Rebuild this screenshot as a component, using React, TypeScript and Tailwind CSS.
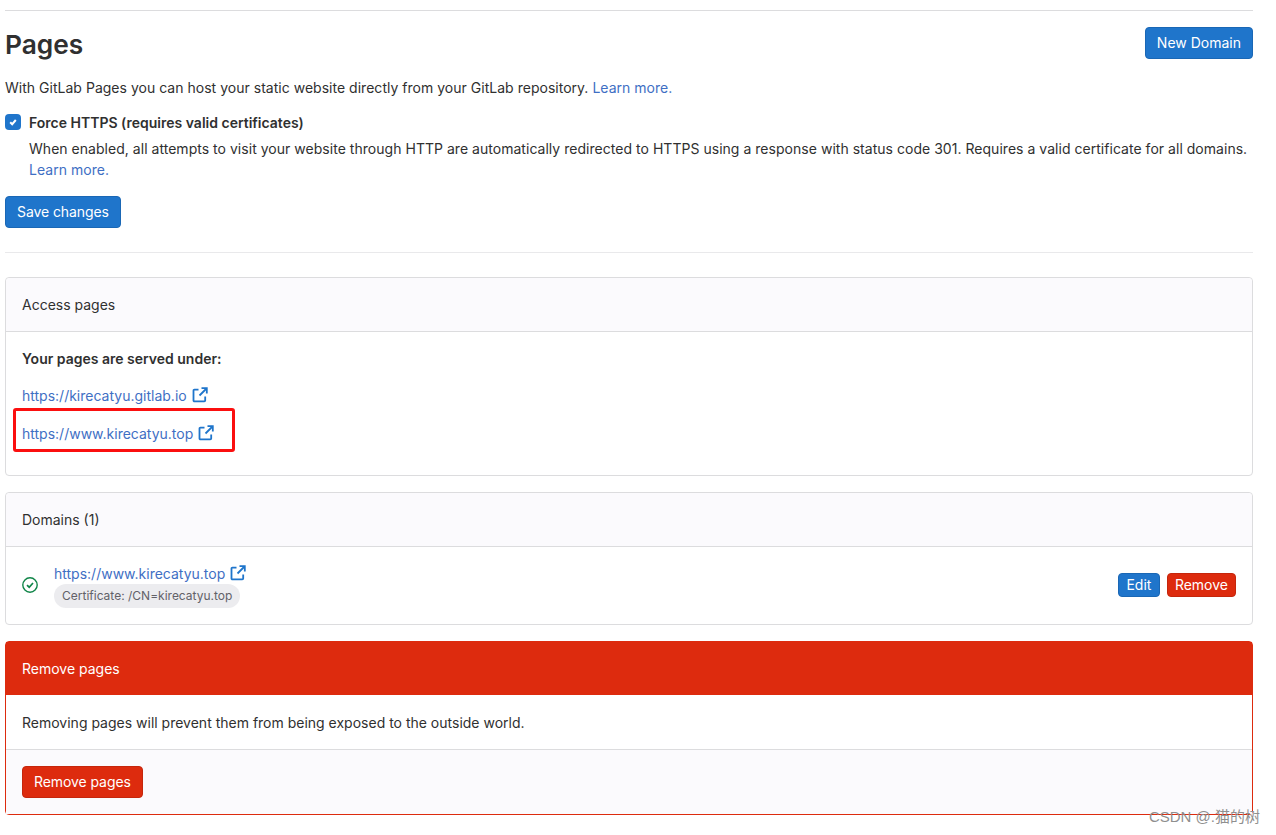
import { FC, ReactNode } from "react";

const ExternalIcon: FC = () => (
  <svg width="16" height="16" viewBox="0 0 16 16" fill="none" stroke="#1f75cb" strokeWidth="1.8" className="shrink-0">
    <path d="M6.5 2.6H2.4A.9.9 0 0 0 1.5 3.5v9.9a.9.9 0 0 0 .9.9h9.9a.9.9 0 0 0 .9-.9V9.5" />
    <path d="M9.5 1.2h5.3v5.3" />
    <path d="M14.5 1.5 7.5 8.5" />
  </svg>
);

const PageLink: FC<{ url: string }> = ({ url }) => (
  <a className="inline-flex items-center gap-[5px] text-[#3f6fc4]" href="#">
    {url}
    <ExternalIcon />
  </a>
);

const Btn: FC<{ red?: boolean; small?: boolean; tight?: boolean; children: ReactNode }> = ({ red, small, tight, children }) => (
  <button
    type="button"
    className={`${red ? "bg-[#dd2b0e] border-[#c5260c]" : "bg-[#1f75cb] border-[#1a67b5]"} ${
      small ? "h-6 px-[7px] rounded-[4px]" : "h-8 px-[11px] rounded-[4px]"
    } ${tight ? "tracking-[-0.08px]" : ""} border text-white text-[14px] leading-none`}
  >
    {children}
  </button>
);

const CardHeader: FC<{ children: ReactNode }> = ({ children }) => (
  <div className="h-[54px] flex items-center px-4 bg-[#fbfafd] border-b border-[#dcdcde] rounded-t-[4px]">{children}</div>
);

const App: FC = () => {
  return (
    <div className="relative w-[1276px] h-[835px] overflow-hidden bg-white text-[14px] text-[#303030] font-['Inter','Liberation_Sans',sans-serif]">
      <div className="w-[1248px] ml-[5px] pt-[10px]">
        <div className="border-t border-[#dcdcde]" />
        <div className="flex justify-between pt-[16px] h-[65px]">
          <h1 className="text-[26.3px] leading-[36px] font-semibold">Pages</h1>
          <Btn>New Domain</Btn>
        </div>
        <p className="leading-5 mt-[2px] tracking-[0.02px]">
          With GitLab Pages you can host your static website directly from your GitLab repository.{" "}
          <a className="text-[#3f6fc4]" href="#">Learn more.</a>
        </p>
        <div className="flex items-center gap-2 mt-[14px] h-5">
          <span className="w-4 h-4 rounded-[4px] bg-[#1f75cb] flex items-center justify-center">
            <svg width="10" height="10" viewBox="0 0 10 10" fill="none" stroke="white" strokeWidth="2">
              <path d="M2.2 5.2 4.2 7.2 7.8 3" />
            </svg>
          </span>
          <label className="font-semibold">Force HTTPS (requires valid certificates)</label>
        </div>
        <p className="ml-6 mt-[6px] leading-[21px] tracking-[0.03px]">
          When enabled, all attempts to visit your website through HTTP are automatically redirected to HTTPS using a
          response with status code 301. Requires a valid certificate for all domains.{" "}
          <a className="text-[#3f6fc4]" href="#">Learn more.</a>
        </p>
        <div className="mt-[16px]">
          <Btn tight>Save changes</Btn>
        </div>
        <div className="border-t border-[#e9e9eb] mt-6" />

        <section className="mt-6 h-[199px] border border-[#dcdcde] rounded-[4px]">
          <CardHeader>Access pages</CardHeader>
          <div className="px-4 pt-[17px]">
            <strong className="block font-semibold leading-5">Your pages are served under:</strong>
            <div className="mt-[16px] h-5 flex items-center">
              <PageLink url="https://kirecatyu.gitlab.io" />
            </div>
            <div className="relative mt-[18px] h-5 flex items-center">
              <PageLink url="https://www.kirecatyu.top" />
              <div className="absolute left-[-9px] top-[-15px] w-[222px] h-[44px] border-[3px] border-[#fb0f0f] rounded-[3px]" />
            </div>
          </div>
        </section>

        <section className="mt-4 h-[133px] border border-[#dcdcde] rounded-[4px]">
          <CardHeader>Domains (1)</CardHeader>
          <div className="flex items-center justify-between px-4 h-[76px]">
            <div className="flex items-center gap-4">
              <svg width="16" height="16" viewBox="0 0 16 16" fill="none" stroke="#108548" strokeWidth="1.4">
                <circle cx="8" cy="8" r="7.2" />
                <path d="M5 8.2 7.2 10.2 11 6" strokeWidth="1.7" />
              </svg>
              <div className="flex flex-col items-start">
                <PageLink url="https://www.kirecatyu.top" />
                <span className="h-6 flex items-center px-2 rounded-full bg-[#ececef] text-[12px] text-[#626168]">
                  Certificate: /CN=kirecatyu.top
                </span>
              </div>
            </div>
            <div className="flex gap-[7px]">
              <Btn small>
                <span className="block w-[26px] text-center">Edit</span>
              </Btn>
              <Btn small red>Remove</Btn>
            </div>
          </div>
        </section>

        <section className="mt-4 h-[174px] border border-[#dd2b0e] rounded-[4px]">
          <div className="h-[53px] flex items-center px-4 bg-[#dd2b0e] text-white">Remove pages</div>
          <div className="h-[55px] flex items-center px-4 pt-[1px] border-b border-[#dcdcde]">
            Removing pages will prevent them from being exposed to the outside world.
          </div>
          <div className="h-[64px] flex items-center px-4 bg-[#fbfafd]">
            <Btn red tight>Remove pages</Btn>
          </div>
        </section>
      </div>
      <span className="absolute right-[16px] top-[808px] text-[15px] leading-[18px] text-[#8f8f8f] font-['Liberation_Sans','Noto_Sans_CJK_SC',sans-serif]">
        CSDN @.猫的树
      </span>
    </div>
  );
};

export default App;
